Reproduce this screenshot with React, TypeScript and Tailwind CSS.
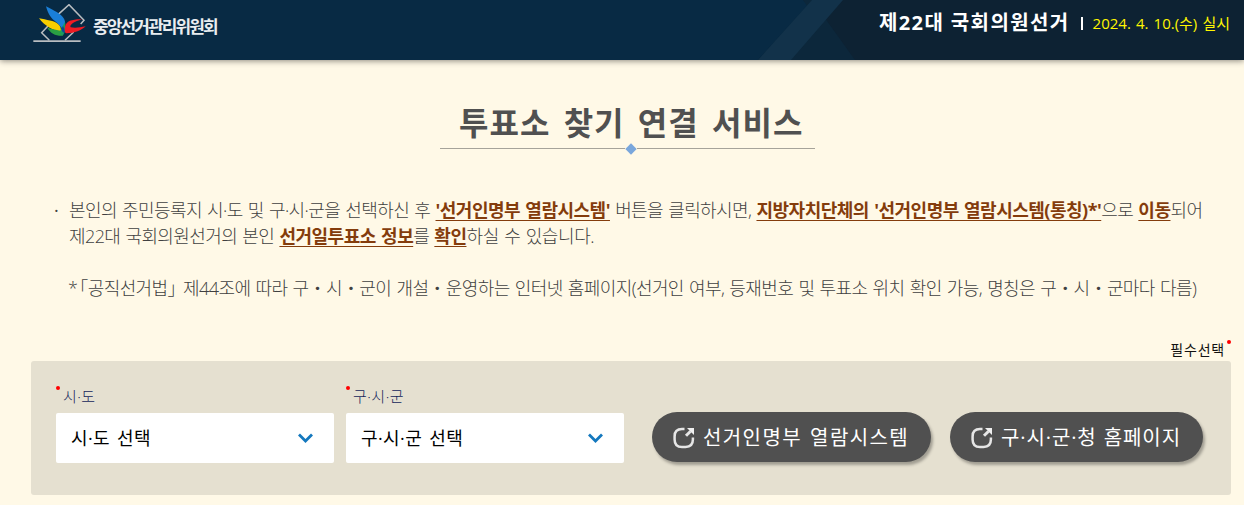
import React from 'react';

function Logo() {
  return (
    <div className="flex items-center">
      <svg className="mr-[6px] block" width="54" height="40" viewBox="9 12 162 120" fill="none">
        <path d="M10 123.5H152" stroke="#b9bdc1" strokeWidth="5" />
        <path d="M58 121L35 98L54 78M84 44L117 14L162 61L152 72M131 96L105 121" stroke="#b9bdc1" strokeWidth="4.5" />
        <path d="M48 19C72 32 92 40 102 56C108 68 106 80 99 88C90 78 84 70 78 66C64 56 54 42 48 19Z" fill="#1a7fd8" />
        <path d="M27 55C50 60 72 62 84 72C92 79 94 86 92 95C70 92 44 78 27 55Z" fill="#f8cf00" />
        <path d="M52 83C66 87 82 90 93 92L98 107C76 108 62 100 52 83Z" fill="#2aa043" />
        <path d="M105 66C108 82 106 98 98 107C90 104 90 94 95 84Z" fill="#1b9a5e" />
        <path d="M99 78C104 86 106 92 103 98C99 98 95 93 95 86Z" fill="#0f3f9c" />
        <path d="M156 58C130 57 108 62 105 80C103 92 104 98 109 100C134 99 154 92 167 79C150 83 134 84 122 82C117 74 134 65 156 58Z" fill="#ee1c24" />
      </svg>
      <span className="mt-[6px] text-[17px] font-bold tracking-[-1.9px] text-[#e9edf0]">중앙선거관리위원회</span>
    </div>
  );
}

function LinkIcon() {
  return (
    <svg className="mr-[8px] shrink-0" width="23" height="23" viewBox="0 0 23 23" fill="none" stroke="#e6e6e6">
      <path
        d="M12.5 3.1H10C5 3.1 2.6 5.6 2.6 10.4V13.4C2.6 18.4 5 21 10 21H13.6C18.4 21 20.9 18.4 20.9 13.6V11.5"
        strokeWidth="2.5"
      />
      <path d="M14 9.8L18.6 5.2" strokeWidth="3" />
      <path d="M15 2H22V9Z" fill="#f0f0f0" stroke="none" />
    </svg>
  );
}

interface SelectProps {
  label: string;
  value: string;
}

function Select({ label, value }: SelectProps) {
  return (
    <div className="w-[278px]">
      <div className="flex h-[27px]">
        <i className="h-1 w-1 rounded-full bg-[#ff0000]" />
        <span className="ml-[3px] text-[15px] leading-[20px] font-light tracking-[0.5px] text-[#14265a]">{label}</span>
      </div>
      <button className="flex h-[50px] w-full items-center justify-between rounded-[2px] bg-white pr-[20px] pl-[15px] text-[18px] text-black">
        <span className="pt-px tracking-[0.4px] [word-spacing:2px]">{value}</span>
        <svg width="17" height="12" viewBox="0 0 17 12" fill="none">
          <path d="M2 2.5L8.5 9L15 2.5" stroke="#1478be" strokeWidth="2.8" />
        </svg>
      </button>
    </div>
  );
}

function Mark({ children }: { children: React.ReactNode }) {
  return (
    <b className="font-bold tracking-[-0.5px] text-[#843c0c] underline decoration-1 underline-offset-[3px]">
      {children}
    </b>
  );
}

export default function App() {
  return (
    <div className="h-[505px] w-[1244px] overflow-hidden bg-[#fff9e7] font-['Open_Sans','Noto_Sans_CJK_KR',sans-serif]">
      <header className="relative flex h-[60px] justify-between bg-[#082a44] pr-[14px] pl-[33px] shadow-[0_1px_6px_rgba(0,0,0,0.45)]">
        <svg className="absolute top-0 right-0" width="504" height="60" viewBox="0 0 504 60">
          <path d="M63 0H504V60H18L70 6Z" fill="#0d2233" />
          <path d="M63 0H72L115 60H18L67 6Z" fill="#0c273b" />
          <path d="M72 0H103L51 60H18Z" fill="#12324a" />
        </svg>
        <div className="relative flex h-[48px] items-center">
          <Logo />
        </div>
        <div className="relative flex h-[46px] items-center">
          <strong className="text-[20px] font-bold tracking-[1.4px] text-white">제22대 국회의원선거</strong>
          <i className="mr-[10px] ml-[11px] h-[13px] w-[2px] bg-white" />
          <span className="text-[15px] text-[#fff600] [word-spacing:1.2px]">2024. 4. 10.(수) 실시</span>
        </div>
      </header>

      <main className="px-[31px]">
        <div className="mt-[40px] ml-[409px] w-[375px]">
          <h1 className="h-[47px] pl-[19px] text-[32px] leading-[45px] font-bold tracking-[1px] whitespace-nowrap text-[#505050] [word-spacing:4px]">
            투표소 찾기 연결 서비스
          </h1>
          <div className="flex h-[3px] items-center">
            <i className="h-px w-[185px] bg-[#a6a39a]" />
            <i className="mx-[2px] h-[8px] w-[8px] rotate-45 bg-[#7aa7dc]" />
            <i className="h-px flex-1 bg-[#a6a39a]" />
          </div>
        </div>

        <div className="mt-[47px] h-[142px] pl-[38px] text-[18px] leading-[26px] font-light tracking-[-0.6px] whitespace-nowrap text-[#404040] [word-spacing:1.1px]">
          <p className="-ml-[15px] flex">
            <span className="w-[15px] font-normal">·</span>
            <span>
              본인의 주민등록지 시·도 및 구·시·군을 선택하신 후 <Mark>'선거인명부 열람시스템'</Mark> 버튼을 클릭하시면,{' '}
              <Mark>지방자치단체의 '선거인명부 열람시스템(통칭)*'</Mark>으로 <Mark>이동</Mark>되어
            </span>
          </p>
          <p>
            제22대 국회의원선거의 본인 <Mark>선거일투표소 정보</Mark>를 <Mark>확인</Mark>
            <span className="tracking-[-0.4px]">하실 수 있습니다.</span>
          </p>
          <p className="mt-[26px] -ml-px">
            *<span className="pr-[2px] pl-[2px] [font-feature-settings:'halt']">「공직선거법」</span> 제44조에 따라 구・시・군이
            개설・운영하는 인터넷 홈페이지(선거인 여부, 등재번호 및 투표소 위치 확인 가능, 명칭은 구・시・군마다 다름)
          </p>
        </div>

        <div className="flex h-[22px] w-[1200px] justify-end">
          <span className="text-[14px] leading-[22px] tracking-[0.8px] text-[#111]">필수선택</span>
          <i className="mt-[1px] ml-[2px] h-1 w-1 rounded-full bg-[#ff0000]" />
        </div>

        <section className="flex h-[134px] w-[1200px] rounded-[3px] bg-[#e5e0d0] pt-[25px] pl-[25px]">
          <Select label="시·도" value="시·도 선택" />
          <div className="w-[12px]" />
          <Select label="구·시·군" value="구·시·군 선택" />
          <button className="mt-[26px] ml-[28px] flex h-[50px] w-[279px] items-center rounded-full bg-[#505050] pl-[20px] text-[20px] tracking-[1.4px] whitespace-nowrap text-white shadow-[2px_3px_3px_rgba(0,0,0,0.3)] [word-spacing:1.5px]">
            <LinkIcon />
            <span className="pt-px">선거인명부 열람시스템</span>
          </button>
          <button className="mt-[26px] ml-[19px] flex h-[50px] w-[253px] items-center rounded-full bg-[#505050] pl-[20px] text-[20px] tracking-[0.9px] whitespace-nowrap text-white shadow-[2px_3px_3px_rgba(0,0,0,0.3)] [word-spacing:1px]">
            <LinkIcon />
            <span className="pt-px">구·시·군·청 홈페이지</span>
          </button>
        </section>
      </main>
    </div>
  );
}
